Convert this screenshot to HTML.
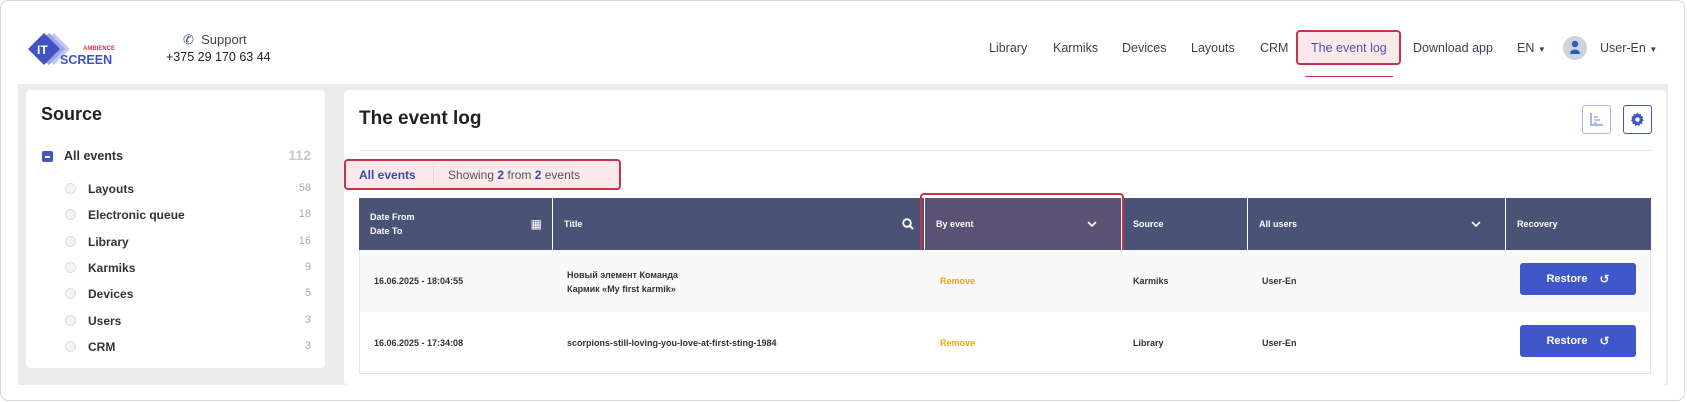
<!DOCTYPE html>
<html><head><meta charset="utf-8"><style>
*{box-sizing:border-box;margin:0;padding:0}
body{width:1687px;height:402px;background:#fff;font-family:"Liberation Sans","DejaVu Sans",sans-serif;position:relative;overflow:hidden;color:#222}
.a{position:absolute}
.frame{left:0;top:0;width:1685px;height:401px;border:1px solid #d8d8d8;border-radius:8px}
.nav{font-size:12.5px;color:#3a3f55;top:41px}
.gray{left:18px;top:84px;width:1650px;height:301px;background:#ebebeb}
.panel{background:#fff;border-radius:4px}
.it{font-size:12px;font-weight:bold;color:#333}
.cnt{font-size:11px;color:#aaa;right:1376px}
.radio{width:11px;height:11px;border-radius:50%;border:1px solid #ddd;background:#f4f4f4}
.th{top:198px;height:52px;background:#4a5275;color:#fff;font-size:9px;font-weight:bold;display:flex;align-items:center;padding-left:11px;border-right:1px solid #fff}
.td{font-size:9px;font-weight:bold;color:#333}
.btn{width:116px;height:32px;background:#3f57c8;border-radius:3px;color:#fff;font-size:11px;font-weight:bold;display:flex;align-items:center;justify-content:center;gap:12px}
</style></head><body>
<div class="a frame"></div>
<svg class="a" style="left:28px;top:32px" width="92" height="36" viewBox="0 0 92 36">
<polygon points="26,1 42,17 26,33 10,17" fill="#c3c9f2"/>
<polygon points="21,1 37,17 21,33 5,17" fill="#9aa5ea"/>
<polygon points="16,1 32,17 16,33 0,17" fill="#4052c4"/>
<text x="9" y="22" font-size="12" font-weight="bold" fill="#fff" font-family="Liberation Sans">IT</text>
<text x="55" y="18" font-size="6" font-weight="bold" fill="#d0394d" font-family="Liberation Sans">AMBIENCE</text>
<text x="32" y="32" font-size="12.5" font-weight="bold" fill="#4052c4" font-family="Liberation Sans">SCREEN</text>
</svg>
<div class="a" style="left:183px;top:32px;font-size:13px;color:#444"><span style="color:#3a4a7a">&#9990;</span>&nbsp;&nbsp;Support</div>
<div class="a" style="left:166px;top:50px;font-size:12.5px;color:#222">+375 29 170 63 44</div>
<div class="a nav" style="left:989px">Library</div>
<div class="a nav" style="left:1053px">Karmiks</div>
<div class="a nav" style="left:1122px">Devices</div>
<div class="a nav" style="left:1191px">Layouts</div>
<div class="a nav" style="left:1260px">CRM</div>
<div class="a" style="left:1296px;top:30px;width:105px;height:35px;border:2px solid #c8334a;border-radius:4px;background:#fbe9ec"></div>
<div class="a nav" style="left:1311px;color:#4a55b0">The event log</div>
<div class="a" style="left:1305px;top:76px;width:88px;height:1px;background:#c8334a"></div>
<div class="a nav" style="left:1413px">Download app</div>
<div class="a nav" style="left:1517px">EN <span style="font-size:8px">&#9660;</span></div>
<div class="a" style="left:1563px;top:36px;width:24px;height:24px;border-radius:50%;background:#cfd3de"></div>
<svg class="a" style="left:1569px;top:40px" width="12" height="14" viewBox="0 0 12 14"><circle cx="6" cy="4" r="3.2" fill="#2d5bc4"/><path d="M1 14 C1 8 11 8 11 14Z" fill="#2d5bc4"/></svg>
<div class="a nav" style="left:1600px">User-En <span style="font-size:8px">&#9660;</span></div>

<div class="a gray"></div>
<div class="a panel" style="left:26px;top:90px;width:299px;height:278px"></div>
<div class="a" style="left:41px;top:104px;font-size:18px;font-weight:bold;color:#222">Source</div>
<div class="a" style="left:42px;top:151px;width:11px;height:11px;background:#3f57c8;border-radius:2px"><div style="margin:5px 3px 0;width:5px;height:1.5px;background:#fff"></div></div>
<div class="a it" style="left:64px;top:149px;font-size:12.5px">All events</div>
<div class="a" style="right:1376px;top:147px;font-size:14px;font-weight:bold;color:#c8c8c8">112</div>
<div class="a radio" style="left:65px;top:183px"></div><div class="a it" style="left:88px;top:182px">Layouts</div><div class="a cnt" style="top:182px">58</div>
<div class="a radio" style="left:65px;top:209px"></div><div class="a it" style="left:88px;top:208px">Electronic queue</div><div class="a cnt" style="top:208px">18</div>
<div class="a radio" style="left:65px;top:236px"></div><div class="a it" style="left:88px;top:235px">Library</div><div class="a cnt" style="top:235px">16</div>
<div class="a radio" style="left:65px;top:262px"></div><div class="a it" style="left:88px;top:261px">Karmiks</div><div class="a cnt" style="top:261px">9</div>
<div class="a radio" style="left:65px;top:288px"></div><div class="a it" style="left:88px;top:287px">Devices</div><div class="a cnt" style="top:287px">5</div>
<div class="a radio" style="left:65px;top:315px"></div><div class="a it" style="left:88px;top:314px">Users</div><div class="a cnt" style="top:314px">3</div>
<div class="a radio" style="left:65px;top:341px"></div><div class="a it" style="left:88px;top:340px">CRM</div><div class="a cnt" style="top:340px">3</div>

<div class="a panel" style="left:344px;top:90px;width:1322px;height:295px"></div>
<div class="a" style="left:359px;top:108px;font-size:19px;font-weight:bold;color:#222">The event log</div>
<div class="a" style="left:1582px;top:105px;width:29px;height:29px;border:1px solid #aab4ea;border-radius:3px"></div>
<svg class="a" style="left:1589px;top:112px" width="15" height="15" viewBox="0 0 15 15"><path d="M2 1V13H14" stroke="#8d9ae6" stroke-width="1.5" fill="none"/><path d="M5 5H9M5 8H11M5 11H8" stroke="#8d9ae6" stroke-width="1.3"/></svg>
<div class="a" style="left:1623px;top:105px;width:29px;height:29px;border:1px solid #3f57c8;border-radius:3px"></div>
<svg class="a" style="left:1630px;top:112px" width="15" height="15" viewBox="0 0 16 16"><path d="M8 0.5l1.3 2 2.3-.7.3 2.4 2.3.8-1 2.2 1.6 1.8-2 1.3.3 2.4-2.4.1-.9 2.2-2-1.3-2 1.3-.9-2.2-2.4-.1.3-2.4-2-1.3 1.6-1.8-1-2.2 2.3-.8.3-2.4 2.3.7z" fill="#3f57c8"/><circle cx="8" cy="8" r="2.4" fill="#fff"/></svg>
<div class="a" style="left:359px;top:150px;width:1292px;height:1px;background:#e8e8e8"></div>
<div class="a" style="left:344px;top:159px;width:277px;height:31px;border:2px solid #c8334a;border-radius:4px;background:#fbe9ec"></div>
<div class="a" style="left:359px;top:168px;font-size:12px;font-weight:bold;color:#3a4aa8">All events</div>
<div class="a" style="left:433px;top:166px;width:1px;height:17px;background:#ddd"></div>
<div class="a" style="left:448px;top:168px;font-size:12px;color:#555">Showing <b style="color:#3a4aa8">2</b> from <b style="color:#3a4aa8">2</b> events</div>

<div class="a th" style="left:359px;width:194px;line-height:14px">Date From<br>Date To<span style="position:absolute;right:10px;top:19px;font-size:12px">&#9638;</span></div>
<div class="a th" style="left:553px;width:372px">Title<svg style="position:absolute;right:10px;top:20px" width="12" height="12" viewBox="0 0 12 12"><circle cx="5" cy="5" r="3.8" stroke="#fff" stroke-width="1.8" fill="none"/><path d="M8 8L11 11" stroke="#fff" stroke-width="2"/></svg></div>
<div class="a th" style="left:925px;width:197px;background:#5a5272">By event<svg style="position:absolute;right:24px;top:23px" width="10" height="7" viewBox="0 0 10 7"><path d="M1 1L5 5L9 1" stroke="#fff" stroke-width="1.6" fill="none"/></svg></div>
<div class="a th" style="left:1122px;width:126px">Source</div>
<div class="a th" style="left:1248px;width:258px">All users<svg style="position:absolute;right:24px;top:23px" width="10" height="7" viewBox="0 0 10 7"><path d="M1 1L5 5L9 1" stroke="#fff" stroke-width="1.6" fill="none"/></svg></div>
<div class="a th" style="left:1506px;width:145px;border-right:none">Recovery</div>
<div class="a" style="left:920px;top:193px;width:204px;height:62px;border:2px solid #c8334a;border-radius:4px"></div>

<div class="a" style="left:359px;top:250px;width:1292px;height:62px;background:#f9f9f9"></div>
<div class="a" style="left:359px;top:250px;width:1292px;height:124px;border:1px solid #e6e6e6;border-top:none"></div>
<div class="a td" style="left:374px;top:276px">16.06.2025 - 18:04:55</div>
<div class="a td" style="left:567px;top:268px;line-height:14px">Новый элемент Команда<br>Кармик «My first karmik»</div>
<div class="a td" style="left:940px;top:276px;color:#f0a800">Remove</div>
<div class="a td" style="left:1133px;top:276px">Karmiks</div>
<div class="a td" style="left:1262px;top:276px">User-En</div>
<div class="a btn" style="left:1520px;top:263px">Restore <span style="font-size:12px">&#8634;</span></div>
<div class="a td" style="left:374px;top:338px">16.06.2025 - 17:34:08</div>
<div class="a td" style="left:567px;top:338px">scorpions-still-loving-you-love-at-first-sting-1984</div>
<div class="a td" style="left:940px;top:338px;color:#f0a800">Remove</div>
<div class="a td" style="left:1133px;top:338px">Library</div>
<div class="a td" style="left:1262px;top:338px">User-En</div>
<div class="a btn" style="left:1520px;top:325px">Restore <span style="font-size:12px">&#8634;</span></div>
</body></html>
